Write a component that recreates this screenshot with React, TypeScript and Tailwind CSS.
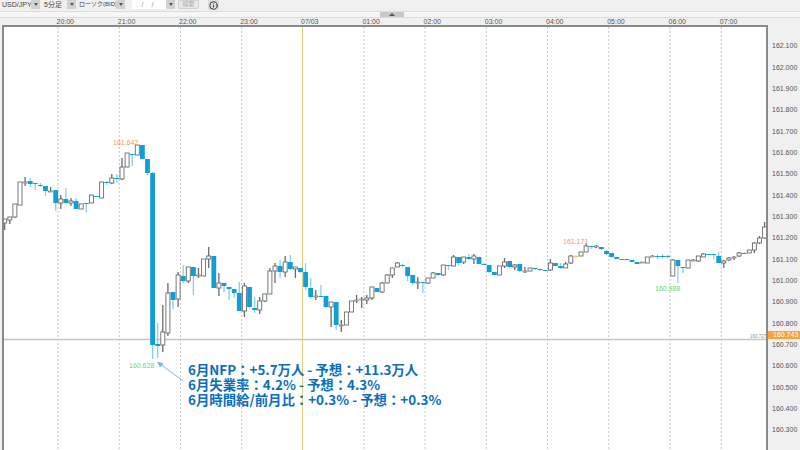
import { Info } from 'lucide-react';

type Kind = 'u' | 'd' | 'o';
type Candle = [number, number, number, number, Kind];

// top, bottom, high, low in page pixels, one candle every 5.1px
const CANDLES: Candle[] = [
  [219,223,219,230,'u'],[217,220,217,224,'u'],[204,217,204,218,'u'],[182,205,182,205,'u'],[182,182.5,177,186,'u'],
  [181,184,178,187,'d'],[183,184,183,190,'d'],[185,186,183,187,'d'],[186,191,186,196,'d'],[191,192,187,192,'u'],
  [190,203,190,211,'d'],[199,203,195,209,'u'],[199,203,188,204,'d'],[201,203,198,206,'u'],[201,209,198,209,'d'],
  [204,209,204,209,'u'],[203,203.5,203,212,'d'],[195,203,195,203,'u'],[196,197,196,197,'d'],[182,198,182,198,'u'],
  [182,183,181,185,'d'],[178,183,174,184,'u'],[178,179,174,183,'d'],[167,179,158,180,'u'],[153,167,153,167,'u'],
  [154,155,154,166,'d'],[145,155,145,155,'u'],[145,159,145,159,'d'],[159,173,159,175,'d'],[173,345,172,359,'d'],
  [344,346,323,358,'d'],[332,345,305,352,'u'],[293,333,283,336,'u'],[292,300,292,309,'d'],[275,299,272,307,'u'],
  [276,281,265,283,'d'],[267,281,267,283,'u'],[267,276,267,295,'d'],[275,276,268,278,'u'],[259,276,259,276,'u'],
  [256,259,247,268,'u'],[256,288,256,288,'d'],[283,288,273,296,'u'],[283,286,283,292,'d'],[287,289,287,300,'d'],
  [289,293,289,298,'d'],[293,311,282,311,'d'],[286,311,283,317,'u'],[287,307,287,308,'d'],[308,310,297,313,'d'],
  [301,310,297,314,'u'],[294,301,294,302,'u'],[271,294,268,294,'u'],[266,271,263,283,'u'],[266,272,260,278,'d'],
  [262,272,256,277,'u'],[262,269,255,270,'d'],[267,269,267,278,'u'],[268,272,268,273,'d'],[272,287,263,290,'d'],
  [288,297,278,299,'d'],[296,297,290,300,'u'],[296,296.5,285,297,'d'],[296,307,296,308,'d'],[302,307,302,327,'u'],
  [302,325,302,330,'d'],[325,325.5,320,332,'u'],[312,325,312,325,'u'],[301,312,301,312,'u'],[300,300.5,295,303,'u'],
  [299,299.5,297,308,'u'],[298,300,295,304,'u'],[287,298,287,300,'u'],[288,292,288,292,'d'],[283,292,282,293,'u'],
  [275,283,274,283,'u'],[268,275,268,278,'u'],[263,267,262,267,'u'],[265,266,264,267,'d'],[267,276,267,281,'d'],
  [275,283,275,285,'d'],[282,283,277,289,'u'],[282,283,282,293,'d'],[278,283,278,284,'u'],[273,278,272,278,'u'],
  [273,275,273,276,'d'],[265,275,265,276,'u'],[265,266,265,270,'d'],[257,266,255,266,'u'],[257,263,257,266,'d'],
  [257,262,257,264,'u'],[257,259,254,260,'d'],[256,259,254,264,'u'],[257,264,257,264,'d'],[264,265,263,265,'d'],
  [265,272,265,273,'d'],[272,275,272,275,'d'],[266,275,266,275,'u'],[262,266,258,268,'u'],[261,267,261,268,'d'],
  [265,267,264,270,'u'],[264,271,264,272,'d'],[271,271.5,267,273,'u'],[268,271,268,271,'u'],[268,269,268,270,'d'],
  [269,270,269,271,'d'],[270,271,270,271,'d'],[263,270,259,271,'u'],[263,266,263,266,'d'],[266,268,263,269,'d'],
  [264,268,262,268,'u'],[256,263,255,264,'u'],[256,256.5,255,258,'o'],[252,256,252,256,'u'],[246,252,244,252,'u'],
  [246,246.5,246,249,'d'],[246,246.5,245,248,'u'],[247,249,247,250,'d'],[251,254,250,255,'d'],[253,257,253,258,'d'],
  [257,259,257,259,'d'],[259,260,259,260,'d'],[259,260,259,260,'d'],[260,262,260,262,'d'],[262,264,262,264,'d'],
  [262,263,262,263,'u'],[257,263,257,263,'u'],[256,257,255,257,'u'],[256,257,255,259,'d'],[256,256.5,254,258,'d'],
  [256,257,255,258,'d'],[260,276,259,276,'u'],[260,266,260,283,'d'],[267,268,267,273,'d'],[260,268,260,268,'u'],
  [260,260.5,259,261,'u'],[256,261,256,262,'u'],[254,257,253,257,'u'],[254,254.5,254,255,'d'],[254,255,254,259,'d'],
  [256,263,252,263,'d'],[261,263,260,268,'u'],[258,260,257,261,'u'],[257,258,256,260,'u'],[253,256,252,257,'u'],
  [253,253.5,252,254,'d'],[250,253,250,253,'u'],[243,250,242,253,'u'],[238,243,236,244,'u'],[227,238,222,239,'u'],
];

const HOURS: [number, string][] = [
  [58, '20:00'], [119.3, '21:00'], [180.5, '22:00'], [241.7, '23:00'], [302.5, '07/03'], [363.9, '01:00'],
  [425, '02:00'], [486.3, '03:00'], [547.5, '04:00'], [608.7, '05:00'], [670, '06:00'], [721.3, '07:00'],
];

const PRICES = [
  '162.100', '162.000', '161.900', '161.800', '161.700', '161.600', '161.500', '161.400', '161.300', '161.200',
  '161.100', '161.000', '160.900', '160.800', '160.700', '160.600', '160.500', '160.400', '160.300',
];

const LABELS: [number, number, string, string][] = [
  [113, 144.5, '161.642', '#f7965a'],
  [129, 367.5, '160.628', '#5fdc6a'],
  [563, 244.3, '161.171', '#f7965a'],
  [655, 291, '160.988', '#5fdc6a'],
];

function DropButton() {
  return (
    <div className="w-[9px] h-[9px] bg-[#d2d2d2] flex items-center justify-center">
      <div className="w-0 h-0 border-l-[2px] border-r-[2px] border-t-[3px] border-l-transparent border-r-transparent border-t-[#555]" />
    </div>
  );
}

function Chart() {
  return (
    <svg className="w-[762px] h-[423px] block" viewBox="4 27 762 423">
      {HOURS.map(([x, t]) =>
        t === '07/03' ? (
          <line key={t} x1={x} x2={x} y1={27} y2={450} stroke="#d9d27e" strokeWidth={1} />
        ) : (
          <line key={t} x1={x} x2={x} y1={27} y2={450} stroke="#c4c4c4" strokeWidth={1} strokeDasharray="2 2" />
        ),
      )}
      <line x1={4} x2={766} y1={339.5} y2={339.5} stroke="#c6c6c6" strokeWidth={1.5} />

      {CANDLES.map(([top, bottom, high, low, kind], i) => {
        const x = 4.7 + 5.1 * i;
        const wick = kind === 'u' ? '#6a6a6a' : kind === 'o' ? '#f5c27a' : '#86d0ea';
        const thin = bottom - top <= 1.2;
        return (
          <g key={i}>
            <line x1={x} x2={x} y1={high} y2={low} stroke={wick} strokeWidth={1.3} />
            {kind === 'u' ? (
              <rect x={x - 2} y={top} width={4} height={Math.max(bottom - top, 1)} fill="#fff" stroke="#6a6a6a" strokeWidth={thin ? 0.6 : 0.9} />
            ) : (
              <rect x={x - 2.4} y={top} width={4.8} height={Math.max(bottom - top, 1)} fill={kind === 'o' ? '#f5c27a' : '#0f9fd6'} />
            )}
          </g>
        );
      })}

      {LABELS.map(([x, y, t, c]) => (
        <text key={t} x={x} y={y} fontSize={7} fill={c} fontFamily="'Liberation Sans', sans-serif">{t}</text>
      ))}
      <text x={750} y={337.5} fontSize={4.5} fill="#8a8a8a" fontFamily="'Liberation Sans', sans-serif">160.727</text>

      {/* arrow from the note to the low */}
      <line x1={183} y1={381} x2={159} y2={363} stroke="#7fb6e0" strokeWidth={1} />
      <path d="M157 361.5 L163.5 363.5 L160 367.5 Z" fill="#7fb6e0" />
    </svg>
  );
}

export default function App() {
  return (
    <div className="w-[800px] h-[450px] overflow-hidden bg-[#f0f0f0] flex flex-col font-['Liberation_Sans','Noto_Sans_CJK_JP',sans-serif] text-[#444]">
      {/* Toolbar */}
      <div className="h-[11px] shrink-0 flex items-start text-[7px] leading-[9px] overflow-hidden">
        <span className="ml-[2px] w-[29px]">USD/JPY</span>
        <DropButton />
        <span className="ml-[4px] w-[23px]">5分足</span>
        <DropButton />
        <span className="ml-[3px] w-[37px] whitespace-nowrap text-[6px]">ローソク(BID)</span>
        <DropButton />
        <div className="ml-[7px] w-[34px] h-[9px] bg-white text-center text-[#888] tracking-[3px]">/ /</div>
        <DropButton />
        <div className="ml-[3px] w-[21px] h-[9px] bg-[#e8e8e8] border border-[#d0d0d0] rounded-b-[2px] text-center text-[#aaa] text-[6px] leading-[7px]">検索</div>
        <div className="ml-[9px] w-[11px] h-[10px] bg-[#dcdcdc] rounded-b-[2px] flex items-center justify-center">
          <Info size={9} strokeWidth={2.5} color="#333" />
        </div>
      </div>

      {/* Splitter */}
      <div className="h-[7px] shrink-0 bg-[#f6f6f6] border-y border-[#dcdcdc]">
        <div className="ml-[380px] w-[24px] h-[5px] bg-[#c9c9c9] flex items-center justify-center">
          <div className="w-0 h-0 border-l-[3px] border-r-[3px] border-b-[3px] border-l-transparent border-r-transparent border-b-[#555]" />
        </div>
      </div>

      {/* Time axis */}
      <svg className="w-[800px] h-[7px] shrink-0 block" viewBox="0 18 800 7">
        {HOURS.map(([x, t]) => (
          <text key={t} x={x - 1.5} y={24.3} fontSize={7} fill="#555" fontFamily="'Liberation Sans', sans-serif">{t}</text>
        ))}
      </svg>

      <div className="flex flex-1 min-h-0">
        <div className="relative ml-[2px] w-[766px] shrink-0 bg-white border-x-2 border-t-2 border-[#8a8a8a]">
          <Chart />
          <div className="absolute left-[184px] top-[335px] text-[13.4px] leading-[15px] font-bold text-[#0a6ebd] whitespace-nowrap font-['Noto_Sans_CJK_JP',sans-serif]">
            <p>6月NFP：+5.7万人 - 予想：+11.3万人</p>
            <p>6月失業率：4.2% - 予想：4.3%</p>
            <p>6月時間給/前月比：+0.3% - 予想：+0.3%</p>
          </div>
        </div>

        {/* Price axis */}
        <div className="relative flex-1 pt-[10.3px] pl-[4px] text-[7px] text-[#555]">
          {PRICES.map((p) => (
            <div key={p} className="h-[21.33px] leading-[21.33px]">{p}</div>
          ))}
          <div className="absolute left-0 top-[306px] w-full h-[8px] pl-[5px] bg-[#f9a23c] text-white leading-[8px]">160.743</div>
        </div>
      </div>
    </div>
  );
}
